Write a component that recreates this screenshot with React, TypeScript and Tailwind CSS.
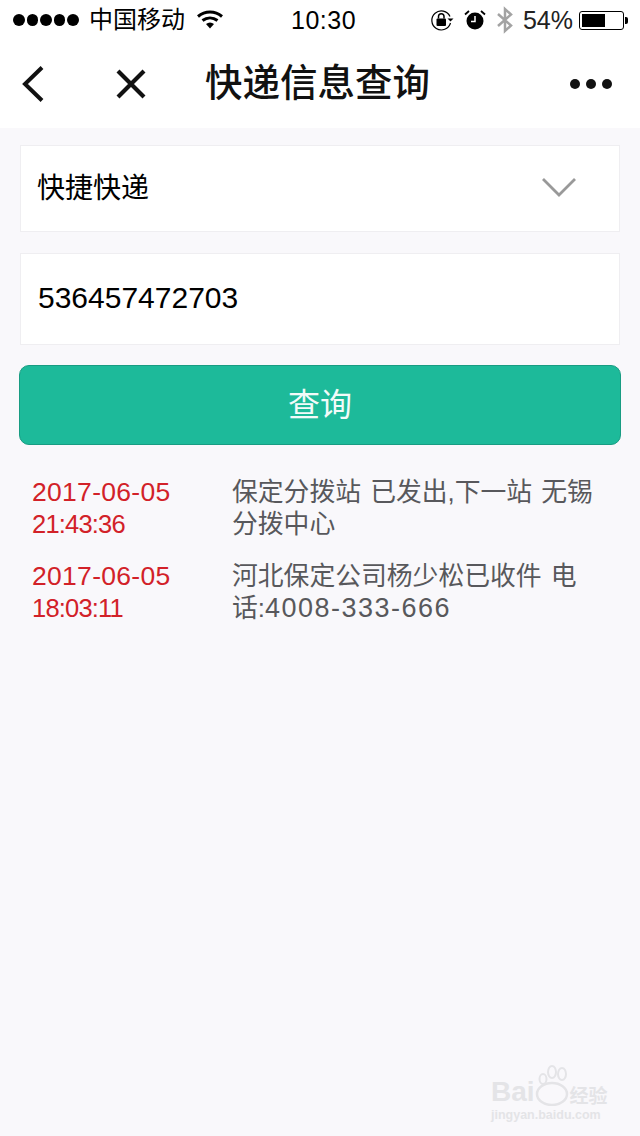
const cjk = 'font-["Liberation_Sans","Noto_Sans_CJK_SC",sans-serif]';

const records = [
  {
    date: '2017-06-05',
    time: '21:43:36',
    lines: [<>保定分拨站 已发出,下一站 无锡</>, <>分拨中心</>],
  },
  {
    date: '2017-06-05',
    time: '18:03:11',
    lines: [
      <>河北保定公司杨少松已收件 电</>,
      <>
        话:<span className="text-[27px] tracking-[1.5px]">4008-333-666</span>
      </>,
    ],
  },
];

function StatusBar() {
  return (
    <div className="h-[40px] flex items-center pl-[13px] pr-[12px] leading-none text-black relative">
      <div className="flex gap-[2px] w-[68px]">
        {[0, 1, 2, 3, 4].map((i) => (
          <span key={i} className="w-[11.5px] h-[11.5px] rounded-full bg-black" />
        ))}
      </div>
      <span className="ml-[8px] text-[24px]">中国移动</span>
      <svg className="ml-[12px]" width="26" height="20" viewBox="0 0 26 20">
        <path d="M1 6.500C8 .5 18 .5 25 6.500" fill="none" stroke="#000" strokeWidth="3" />
        <path d="M5.500 10.500C10 7 16 7 20.500 10.500" fill="none" stroke="#000" strokeWidth="3" />
        <path d="M9 14c2.500-2 5.500-2 8 0l-4 4.500z" fill="#000" />
      </svg>
      <span className="ml-[68px] text-[25px] tracking-[0.5px]">10:30</span>
      <div className="ml-auto flex items-center">
        <svg width="24" height="24" viewBox="0 0 24 24">
          <path d="M20 8.500A9.500 9.500 0 1 0 20.500 15" fill="none" stroke="#000" strokeWidth="1.200" />
          <path d="M17.500 10.500h6l-3 3z" fill="#000" />
          <rect x="6.500" y="10.500" width="9.500" height="7.500" rx="1" fill="#000" />
          <path d="M8.500 10.500V8.500a2.700 2.700 0 0 1 5.500 0v2" fill="none" stroke="#000" strokeWidth="1.500" />
        </svg>
        <svg className="ml-[10px]" width="22" height="22" viewBox="0 0 22 22">
          <circle cx="11" cy="12" r="8.500" fill="#000" />
          <path d="M11 7v5.500H7" fill="none" stroke="#fff" strokeWidth="1.500" />
          <path d="M1 5.500 5 2M21 5.500 17 2" fill="none" stroke="#000" strokeWidth="1.800" />
        </svg>
        <svg className="ml-[10px]" width="18" height="28" viewBox="0 0 18 28">
          <path d="M2 8 15 19.500 9 25V3l6 5.500L2 20" fill="none" stroke="#a3a3a3" strokeWidth="2.500" />
        </svg>
        <span className="ml-[9px] text-[25px] text-[#222]">54%</span>
        <div className="ml-[6px] w-[45px] h-[19px] rounded-[3px] border border-black p-[2px]">
          <div className="w-[23px] h-full bg-black" />
        </div>
        <span className="w-[3px] h-[7px] bg-black rounded-r-[2px] ml-[1px]" />
      </div>
    </div>
  );
}

function NavBar() {
  return (
    <div className="h-[88px] flex items-center">
      <svg className="ml-[21px]" width="24" height="38" viewBox="0 0 24 38">
        <path d="M21 2.500 4 19l17 16.500" fill="none" stroke="#111" strokeWidth="4" />
      </svg>
      <svg className="ml-[70px]" width="32" height="32" viewBox="0 0 32 32">
        <path d="M3 3l26 26M29 3 3 29" fill="none" stroke="#111" strokeWidth="4.200" />
      </svg>
      <h1 className="ml-[58px] text-[37.500px] leading-none font-medium text-[#111] whitespace-nowrap">
        快递信息查询
      </h1>
      <div className="ml-auto mr-[28px] flex gap-[6px]">
        <span className="w-[10px] h-[10px] rounded-full bg-[#111]" />
        <span className="w-[10px] h-[10px] rounded-full bg-[#111]" />
        <span className="w-[10px] h-[10px] rounded-full bg-[#111]" />
      </div>
    </div>
  );
}

function Watermark() {
  return (
    <div className="absolute left-[491px] top-[1064px] w-[116px] select-none text-[#e4e4e7]">
      <div className="flex items-end h-[42px] whitespace-nowrap">
        <span className="text-[28px] font-bold leading-none">Bai</span>
        <svg width="36" height="42" viewBox="0 0 36 42" className="-ml-[1px] shrink-0">
          <ellipse cx="18" cy="30" rx="15" ry="11" fill="none" stroke="#e4e4e7" strokeWidth="2.500" />
          <ellipse cx="9" cy="15" rx="3.500" ry="5" fill="none" stroke="#e4e4e7" strokeWidth="2" />
          <ellipse cx="18" cy="8" rx="4" ry="6" fill="none" stroke="#e4e4e7" strokeWidth="2" />
          <ellipse cx="28" cy="10" rx="4" ry="6" fill="none" stroke="#e4e4e7" strokeWidth="2" />
        </svg>
        <span className="text-[19px] leading-none font-bold shrink-0">经验</span>
      </div>
      <div className="text-[12.500px] leading-none mt-[3px] font-bold whitespace-nowrap">jingyan.baidu.com</div>
    </div>
  );
}

export default function App() {
  return (
    <div className={`w-[640px] h-[1136px] relative overflow-hidden bg-[#f9f8fb] ${cjk}`}>
      <header className="bg-white">
        <StatusBar />
        <NavBar />
      </header>

      <main className="px-[19px] pt-[17px]">
        <div className="mx-[1px] h-[87px] bg-white border border-[#efeef1] flex items-center justify-between pl-[16px] pr-[43px]">
          <span className="text-[28px] leading-none text-black">快捷快递</span>
          <svg width="34" height="20" viewBox="0 0 34 20" className="-mt-[3px]">
            <path d="M1 2l16 16L33 2" fill="none" stroke="#999" strokeWidth="2.800" />
          </svg>
        </div>

        <div className="mx-[1px] mt-[21px] h-[92px] bg-white border border-[#efeef1] flex items-center pl-[17px]">
          <span className="text-[30px] leading-none text-black -mt-[2px]">536457472703</span>
        </div>

        <button className="mt-[20px] w-full h-[80px] rounded-[10px] bg-[#1dba9a] border border-[#189c82] text-[#f2fbf9] text-[32px] leading-none">
          查询
        </button>

        <div className="mt-[31px] pl-[13px] flex flex-col gap-[20px]">
          {records.map((r) => (
            <div key={r.time} className="flex leading-[32px]">
              <div className="w-[200px] text-[#d22128]">
                <div className="text-[26.500px] tracking-[0.3px]">{r.date}</div>
                <div className="text-[25.500px] tracking-[-0.8px]">{r.time}</div>
              </div>
              <div className="text-[25.800px] [word-spacing:2px] text-[#58585c] whitespace-nowrap">
                {r.lines.map((l, i) => (
                  <div key={i}>{l}</div>
                ))}
              </div>
            </div>
          ))}
        </div>
      </main>

      <Watermark />
    </div>
  );
}
